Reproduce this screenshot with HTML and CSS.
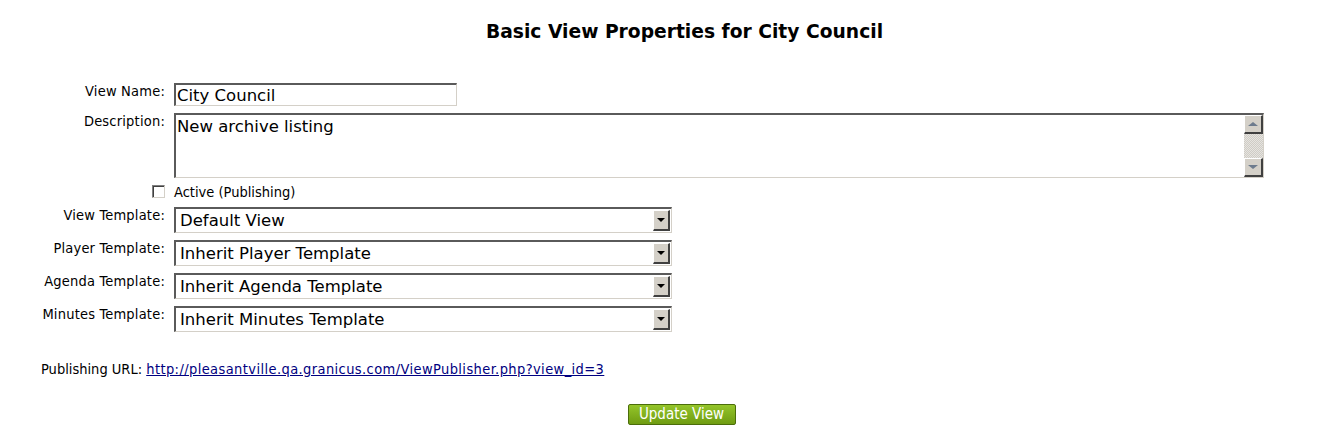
FILE: index.html
```html
<!DOCTYPE html>
<html>
<head>
  <meta charset="utf-8">
  <title>Basic View Properties</title>
  <link rel="stylesheet" href="styles.css">
</head>
<body>
  <main class="page">
    <h1 class="title">Basic View Properties for City Council</h1>

    <form class="form">
      <label class="lbl" for="view_name">View Name:</label>
      <div class="cell">
        <input id="view_name" class="text" type="text" value="City Council">
      </div>

      <label class="lbl" for="view_desc">Description:</label>
      <div class="cell">
        <div class="area">
          <textarea id="view_desc">New archive listing</textarea>
          <div class="scrollbar">
            <span class="sb-btn up"></span>
            <span class="sb-track"></span>
            <span class="sb-btn down"></span>
          </div>
        </div>
      </div>

      <div class="lbl check-cell"><input id="view_active" class="check" type="checkbox"></div>
      <label class="cell check-label" for="view_active">Active (Publishing)</label>

      <label class="lbl">View Template:</label>
      <div class="cell">
        <div class="select"><span class="value">Default View</span><span class="arrow"></span></div>
      </div>

      <label class="lbl">Player Template:</label>
      <div class="cell">
        <div class="select"><span class="value">Inherit Player Template</span><span class="arrow"></span></div>
      </div>

      <label class="lbl">Agenda Template:</label>
      <div class="cell">
        <div class="select"><span class="value">Inherit Agenda Template</span><span class="arrow"></span></div>
      </div>

      <label class="lbl">Minutes Template:</label>
      <div class="cell">
        <div class="select"><span class="value">Inherit Minutes Template</span><span class="arrow"></span></div>
      </div>
    </form>

    <p class="pub-url">
      Publishing URL: <a href="#">http://pleasantville.qa.granicus.com/ViewPublisher.php?view_id=3</a>
    </p>

    <div class="actions">
      <button class="btn" type="button">Update View</button>
    </div>
  </main>
</body>
</html>
```

FILE: styles.css
```css
html,
body {
  margin: 0;
  padding: 0;
  background-color: #fff;
}
body {
  font-family: "DejaVu Sans Condensed", "DejaVu Sans", Tahoma, sans-serif;
  font-size: 14.5px;
  color: #000;
}

.title {
  margin: 21px 0 0;
  padding-left: 50px;
  text-align: center;
  font-family: "DejaVu Sans", Verdana, sans-serif;
  font-size: 18.7px;
  font-weight: bold;
  line-height: 22px;
}

.form {
  display: grid;
  grid-template-columns: 165px 1fr;
  column-gap: 9px;
  row-gap: 7px;
  margin: 40px 55px 0 0;
}
.lbl {
  justify-self: end;
  white-space: nowrap;
  line-height: 15px;
  padding-top: 1px;
  letter-spacing: 0.2px;
}
.cell {
  display: flex;
}

/* inset boxes */
.text,
.area,
.select {
  box-sizing: border-box;
  border-top: 2px solid #5a5a5a;
  border-left: 2px solid #5a5a5a;
  border-right: 1px solid #d4d0c8;
  border-bottom: 1px solid #d4d0c8;
  background: #fff;
  font-family: "DejaVu Sans", Verdana, sans-serif;
  font-size: 16.5px;
  color: #000;
}
.text {
  width: 283px;
  height: 23px;
  padding: 0 1px;
  margin: 0;
  outline: none;
}

.area {
  display: flex;
  width: 1090px;
  height: 65px;
}
.area textarea {
  flex: 1;
  border: 0;
  margin: 0;
  padding: 2px 1px 1px;
  resize: none;
  outline: none;
  overflow: hidden;
  font: inherit;
  line-height: 20px;
}
.scrollbar {
  display: flex;
  flex-direction: column;
  width: 19px;
  background-color: #fff;
}
.sb-btn {
  box-sizing: border-box;
  height: 19px;
  background: #d4d0c8;
  border-top: 1px solid #fff;
  border-left: 1px solid #fff;
  border-right: 2px solid #404040;
  border-bottom: 2px solid #404040;
  display: flex;
  align-items: center;
  justify-content: center;
}
.sb-btn::after {
  content: "";
  border-left: 5px solid transparent;
  border-right: 5px solid transparent;
}
.sb-btn.up::after {
  border-bottom: 4px solid #6d7b8d;
}
.sb-btn.down::after {
  border-top: 4px solid #6d7b8d;
}
.sb-track {
  flex: 1;
  background-color: #e6e4e0;
  background-image:
    linear-gradient(45deg, #cfccc5 25%, transparent 25%, transparent 75%, #cfccc5 75%),
    linear-gradient(45deg, #cfccc5 25%, transparent 25%, transparent 75%, #cfccc5 75%);
  background-size: 2px 2px;
  background-position: 0 0, 1px 1px;
}

.check-cell {
  padding-top: 0;
  height: 15px;
}
.check {
  appearance: none;
  -webkit-appearance: none;
  box-sizing: border-box;
  display: block;
  width: 13px;
  height: 13px;
  margin: 0;
  background: #fff;
  border-top: 1px solid #808080;
  border-left: 1px solid #808080;
  border-right: 1px solid #d4d0c8;
  border-bottom: 1px solid #d4d0c8;
  box-shadow: inset 1px 1px 0 #404040;
}
.check-label {
  line-height: 15px;
  height: 15px;
}

.select {
  display: flex;
  align-items: stretch;
  width: 498px;
  height: 26px;
  padding: 1px 1px 1px 4px;
}
.select .value {
  flex: 1;
  line-height: 22px;
}
.select .arrow {
  box-sizing: border-box;
  width: 17px;
  background: #d4d0c8;
  border-top: 1px solid #fff;
  border-left: 1px solid #fff;
  border-right: 2px solid #404040;
  border-bottom: 2px solid #404040;
  display: flex;
  align-items: center;
  justify-content: center;
}
.select .arrow::after {
  content: "";
  border-left: 4px solid transparent;
  border-right: 4px solid transparent;
  border-top: 4px solid #000;
}

.pub-url {
  margin: 29px 0 0 41px;
  line-height: 16px;
}
.pub-url a {
  color: #000080;
  letter-spacing: 0.4px;
}

.actions {
  margin-top: 27px;
  padding-left: 44px;
  text-align: center;
}
.btn {
  width: 108px;
  height: 21px;
  padding: 0;
  border: 1px solid #4b6d0a;
  border-radius: 2px;
  background: linear-gradient(#94c52a, #6f9c12);
  color: #fff;
  font-family: "DejaVu Sans Condensed", "DejaVu Sans", Tahoma, sans-serif;
  font-size: 15px;
  line-height: 19px;
}
```
